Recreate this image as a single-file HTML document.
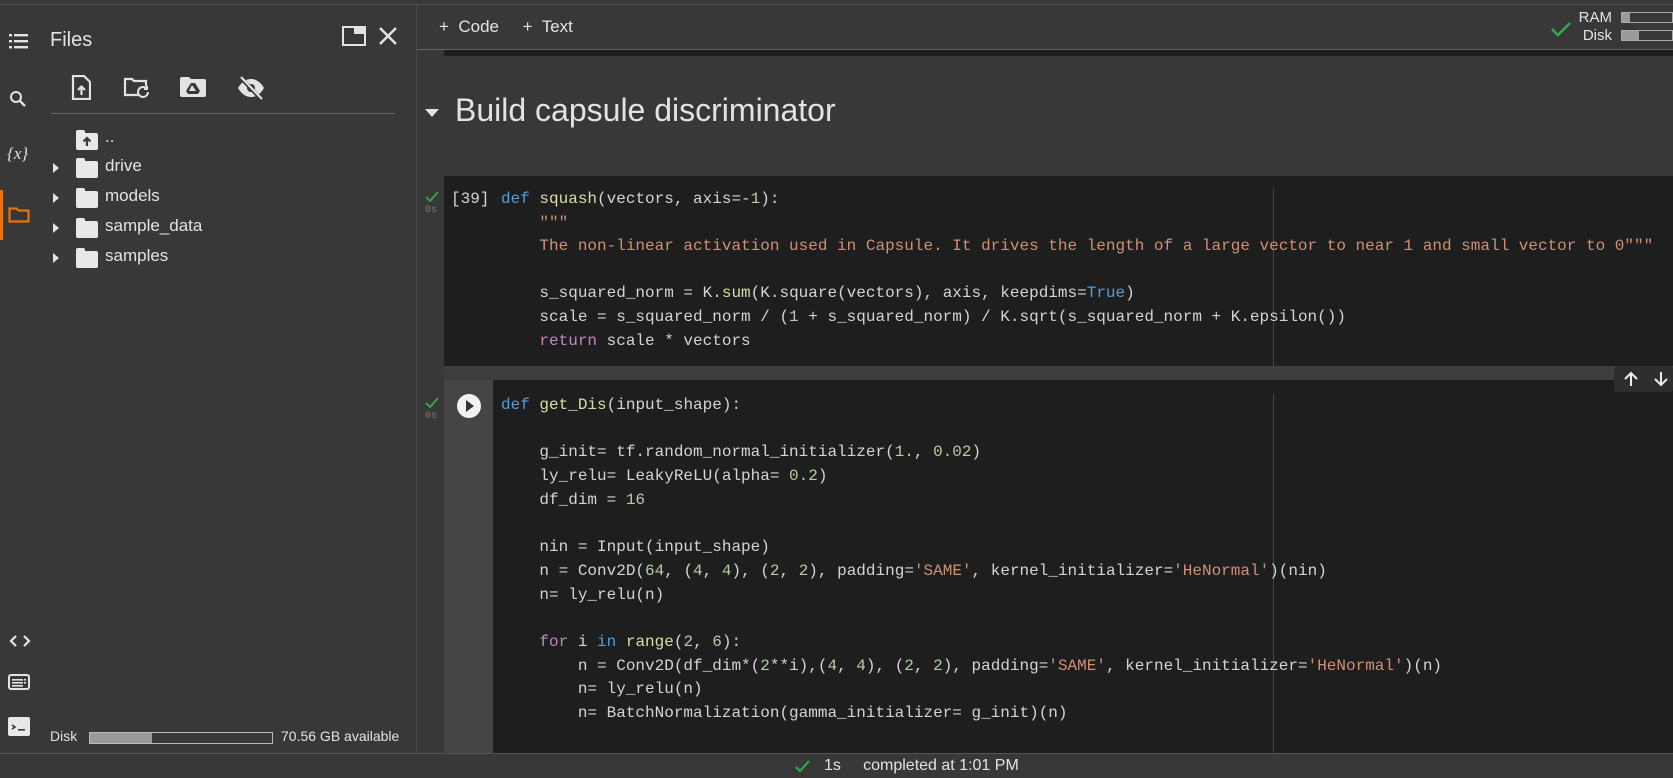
<!DOCTYPE html><html><head><meta charset="utf-8"><style>
*{margin:0;padding:0;box-sizing:border-box}
body{width:1673px;height:778px;background:#383838;position:relative;overflow:hidden;font-family:"Liberation Sans",sans-serif;color:#e3e3e3}
.a{position:absolute}
.code{font-family:"Liberation Mono",monospace;font-size:16px;color:#d4d4d4;white-space:pre;line-height:23.6px}
.k{color:#569cd6}.f{color:#dcdcaa}.s{color:#ce9178}.n{color:#b5cea8}.p{color:#c586c0}
.ic{position:absolute;fill:#e3e3e3}
.fold{width:22px;height:17px;background:#e8e8e8;border-radius:2px;position:absolute}
.fold:before{content:"";position:absolute;left:0;top:-3px;width:9px;height:4px;background:#e8e8e8;border-radius:2px 2px 0 0}
.tri{position:absolute;width:0;height:0;border-left:6px solid #e3e3e3;border-top:5px solid transparent;border-bottom:5px solid transparent}
.ft{position:absolute;font-size:17px;color:#e3e3e3}
</style></head><body>
<div class="a" style="left:0;top:4px;width:1673px;height:1px;background:#555"></div>
<!-- left strip icons -->
<svg class="ic" style="left:9px;top:33px" width="20" height="16" viewBox="0 0 20 16"><rect x="0" y="1" width="3" height="2.4"/><rect x="5" y="1" width="14" height="2.4"/><rect x="0" y="7" width="3" height="2.4"/><rect x="5" y="7" width="14" height="2.4"/><rect x="0" y="13" width="3" height="2.4"/><rect x="5" y="13" width="14" height="2.4"/></svg>
<svg class="ic" style="left:9px;top:90px" width="18" height="18" viewBox="0 0 18 18"><circle cx="7" cy="7" r="5" fill="none" stroke="#e3e3e3" stroke-width="2"/><path d="M10.5 10.5L16 16" stroke="#e3e3e3" stroke-width="2.4"/></svg>
<div class="a" style="left:7px;top:144px;font-family:'Liberation Serif',serif;font-size:17px;font-style:italic">{<i>x</i>}</div>
<div class="a" style="left:0;top:190px;width:3px;height:50px;background:#e8710a"></div>
<svg class="a" style="left:8px;top:205px" width="22" height="18" viewBox="0 0 22 18"><path d="M1.5 3.5h7l2 2h10v11h-19z" fill="none" stroke="#e8710a" stroke-width="2.2"/></svg>
<svg class="a" style="left:9px;top:634px" width="22" height="14" viewBox="0 0 22 14"><path d="M7 2L2 7l5 5M15 2l5 5-5 5" fill="none" stroke="#e3e3e3" stroke-width="2.2"/></svg>
<svg class="a" style="left:8px;top:674px" width="22" height="16" viewBox="0 0 22 16"><rect x="1" y="1" width="20" height="14" rx="2" fill="none" stroke="#e3e3e3" stroke-width="2"/><rect x="4" y="5" width="11" height="1.6" fill="#e3e3e3"/><rect x="4" y="8" width="11" height="1.6" fill="#e3e3e3"/><rect x="4" y="11" width="11" height="1.6" fill="#e3e3e3"/><rect x="16" y="5" width="2" height="1.6" fill="#e3e3e3"/><rect x="16" y="8" width="2" height="1.6" fill="#e3e3e3"/></svg>
<svg class="a" style="left:8px;top:717px" width="22" height="19" viewBox="0 0 22 19"><rect x="0" y="0" width="22" height="19" rx="2" fill="#e8e8e8"/><path d="M4 8l3 2-3 2" stroke="#383838" stroke-width="1.6" fill="none"/><rect x="10" y="12" width="7" height="1.6" fill="#383838"/></svg>
<!-- files panel -->
<div class="a" style="left:50px;top:29px;font-size:20px;color:#e3e3e3">Files</div>
<svg class="a" style="left:342px;top:26px" width="24" height="20" viewBox="0 0 24 20"><rect x="1" y="1" width="22" height="18" fill="none" stroke="#e3e3e3" stroke-width="2"/><rect x="12" y="1" width="11" height="7" fill="#e3e3e3"/></svg>
<svg class="a" style="left:378px;top:26px" width="20" height="20" viewBox="0 0 20 20"><path d="M2 2L18 18M18 2L2 18" stroke="#e3e3e3" stroke-width="2.4"/></svg>
<svg class="a" style="left:71px;top:75px" width="20" height="25" viewBox="0 0 20 25"><path d="M2 1h11l6 6v17H2z" fill="none" stroke="#e3e3e3" stroke-width="2.2"/><path d="M10.5 20v-8M7 15l3.5-3.5L14 15" stroke="#e3e3e3" stroke-width="2.2" fill="none"/></svg>
<svg class="a" style="left:123px;top:77px" width="28" height="22" viewBox="0 0 28 22"><path d="M15 18H2V2h7l2 2h12v5" fill="none" stroke="#e3e3e3" stroke-width="2.2"/><path d="M25 15a5 5 0 1 1-2-4M24 9v3h-3" fill="none" stroke="#e3e3e3" stroke-width="2"/></svg>
<svg class="a" style="left:180px;top:77px" width="26" height="20" viewBox="0 0 26 20"><path d="M0 2a2 2 0 0 1 2-2h7l2 2h13a2 2 0 0 1 2 2v14a2 2 0 0 1-2 2H2a2 2 0 0 1-2-2z" fill="#e3e3e3"/><path d="M11 6h4l5 8-2 3H8l-2-3z" fill="#383838"/><path d="M12 8l4 6h-7z" fill="#e3e3e3"/></svg>
<svg class="a" style="left:237px;top:76px" width="28" height="24" viewBox="0 0 28 24"><path d="M1 12C5 5 10 3 14 3s9 2 13 9c-4 7-9 9-13 9S5 19 1 12z" fill="#e3e3e3"/><circle cx="14" cy="12" r="4" fill="#383838"/><path d="M4 2l20 21" stroke="#383838" stroke-width="4"/><path d="M4 1l21 22" stroke="#e3e3e3" stroke-width="2.2"/></svg>
<div class="a" style="left:51px;top:113px;width:344px;height:1px;background:#666"></div>
<div class="fold" style="left:76px;top:133px"></div>
<svg class="a" style="left:81px;top:134px" width="12" height="14" viewBox="0 0 12 14"><path d="M6 12V5M2.5 7.5L6 4l3.5 3.5" stroke="#383838" stroke-width="2.2" fill="none"/></svg>
<div class="ft" style="left:105px;top:127px">..</div>
<div class="tri" style="left:53px;top:163px"></div><div class="fold" style="left:76px;top:161px"></div><div class="ft" style="left:105px;top:156px">drive</div>
<div class="tri" style="left:53px;top:193px"></div><div class="fold" style="left:76px;top:191px"></div><div class="ft" style="left:105px;top:186px">models</div>
<div class="tri" style="left:53px;top:223px"></div><div class="fold" style="left:76px;top:221px"></div><div class="ft" style="left:105px;top:216px">sample_data</div>
<div class="tri" style="left:53px;top:253px"></div><div class="fold" style="left:76px;top:251px"></div><div class="ft" style="left:105px;top:246px">samples</div>
<div class="a" style="left:50px;top:728px;font-size:14px">Disk</div>
<div class="a" style="left:89px;top:732px;width:184px;height:12px;border:1px solid #bbb"><div style="width:62px;height:10px;background:#9a9a9a"></div></div>
<div class="a" style="left:281px;top:728px;font-size:14px">70.56 GB available</div>
<div class="a" style="left:416px;top:5px;width:1px;height:748px;background:#4a4a4a"></div>
<!-- toolbar -->
<div class="a" style="left:439px;top:17px;font-size:17px">+&nbsp; Code&nbsp;&nbsp;&nbsp;&nbsp; +&nbsp; Text</div>
<div class="a" style="left:417px;top:49px;width:1256px;height:1px;background:#666"></div>
<div class="a" style="left:444px;top:50px;width:1229px;height:6px;background:#1e1e1e"></div>
<svg class="a" style="left:1551px;top:21px" width="20" height="16" viewBox="0 0 20 16"><path d="M1 8l6 6L19 2" stroke="#34a853" stroke-width="2.4" fill="none"/></svg>
<div class="a" style="left:1570px;top:9px;font-size:15px;line-height:18px;text-align:right;width:42px">RAM<br>Disk</div>
<div class="a" style="left:1621px;top:12px;width:52px;height:11px;border:1px solid #aaa"><div style="width:8px;height:9px;background:#9a9a9a"></div></div>
<div class="a" style="left:1621px;top:30px;width:52px;height:11px;border:1px solid #aaa"><div style="width:17px;height:9px;background:#9a9a9a"></div></div>
<!-- heading -->
<svg class="a" style="left:425px;top:109px" width="14" height="8" viewBox="0 0 14 8"><path d="M0 0h14L7 8z" fill="#e3e3e3"/></svg>
<div class="a" style="left:455px;top:92px;font-size:32px;color:#e3e3e3">Build capsule discriminator</div>
<!-- cell 1 -->
<div class="a" style="left:444px;top:176px;width:1229px;height:190px;background:#1e1e1e"></div>
<div class="a" style="left:444px;top:366px;width:1229px;height:14px;background:#3e3e3e"></div>
<div class="a" style="left:1273px;top:188px;width:1px;height:178px;background:#444"></div>
<svg class="a" style="left:425px;top:191px" width="14" height="11" viewBox="0 0 14 11"><path d="M1 6l4 4 8-9" stroke="#34a853" stroke-width="1.8" fill="none"/></svg>
<div class="a" style="left:425px;top:205px;font-size:10px;color:#777;font-family:'Liberation Mono',monospace">0s</div>
<div class="a code" style="left:451px;top:188px">[39]</div>
<div class="a code" style="left:501px;top:188px"><span class="k">def</span> <span class="f">squash</span>(vectors, axis=-<span class="n">1</span>):
    <span class="s">"""</span>
    <span class="s">The non-linear activation used in Capsule. It drives the length of a large vector to near 1 and small vector to 0"""</span>

    s_squared_norm = K.<span class="f">sum</span>(K.square(vectors), axis, keepdims=<span class="k">True</span>)
    scale = s_squared_norm / (<span class="n">1</span> + s_squared_norm) / K.sqrt(s_squared_norm + K.epsilon())
    <span class="p">return</span> scale * vectors</div>
<!-- cell 2 -->
<div class="a" style="left:444px;top:380px;width:1229px;height:373px;background:#1e1e1e"></div>
<div class="a" style="left:444px;top:380px;width:49px;height:373px;background:#454545"></div>
<div class="a" style="left:1273px;top:394px;width:1px;height:359px;background:#444"></div>
<svg class="a" style="left:425px;top:397px" width="14" height="11" viewBox="0 0 14 11"><path d="M1 6l4 4 8-9" stroke="#34a853" stroke-width="1.8" fill="none"/></svg>
<div class="a" style="left:425px;top:411px;font-size:10px;color:#777;font-family:'Liberation Mono',monospace">0s</div>
<div class="a" style="left:457px;top:394px;width:24px;height:24px;border-radius:50%;background:#f2f2f2"></div>
<svg class="a" style="left:465px;top:400px" width="10" height="12" viewBox="0 0 10 12"><path d="M1 0l8 6-8 6z" fill="#333"/></svg>
<div class="a code" style="left:501px;top:394px;line-height:23.7px"><span class="k">def</span> <span class="f">get_Dis</span>(input_shape):

    g_init= tf.random_normal_initializer(<span class="n">1.</span>, <span class="n">0.02</span>)
    ly_relu= LeakyReLU(alpha= <span class="n">0.2</span>)
    df_dim = <span class="n">16</span>

    nin = Input(input_shape)
    n = Conv2D(<span class="n">64</span>, (<span class="n">4</span>, <span class="n">4</span>), (<span class="n">2</span>, <span class="n">2</span>), padding=<span class="s">'SAME'</span>, kernel_initializer=<span class="s">'HeNormal'</span>)(nin)
    n= ly_relu(n)

    <span class="p">for</span> i <span class="k">in</span> <span class="f">range</span>(<span class="n">2</span>, <span class="n">6</span>):
        n = Conv2D(df_dim*(<span class="n">2</span>**i),(<span class="n">4</span>, <span class="n">4</span>), (<span class="n">2</span>, <span class="n">2</span>), padding=<span class="s">'SAME'</span>, kernel_initializer=<span class="s">'HeNormal'</span>)(n)
        n= ly_relu(n)
        n= BatchNormalization(gamma_initializer= g_init)(n)</div>
<!-- arrows overlay -->
<div class="a" style="left:1614px;top:366px;width:59px;height:26px;background:#2e2e2e;border-radius:3px"></div>
<svg class="a" style="left:1622px;top:370px" width="18" height="18" viewBox="0 0 18 18"><path d="M9 16V3M3 9l6-6 6 6" stroke="#eee" stroke-width="2" fill="none"/></svg>
<svg class="a" style="left:1652px;top:370px" width="18" height="18" viewBox="0 0 18 18"><path d="M9 2v13M3 9l6 6 6-6" stroke="#eee" stroke-width="2" fill="none"/></svg>
<!-- status bar -->
<div class="a" style="left:0;top:753px;width:1673px;height:25px;background:#383838;border-top:1px solid #555"></div>
<svg class="a" style="left:795px;top:760px" width="16" height="13" viewBox="0 0 16 13"><path d="M1 7l4 4 9-10" stroke="#34a853" stroke-width="2" fill="none"/></svg>
<div class="a" style="left:824px;top:757px;font-size:16px">1s&nbsp;&nbsp;&nbsp;&nbsp;&nbsp;completed at 1:01 PM</div>
</body></html>
